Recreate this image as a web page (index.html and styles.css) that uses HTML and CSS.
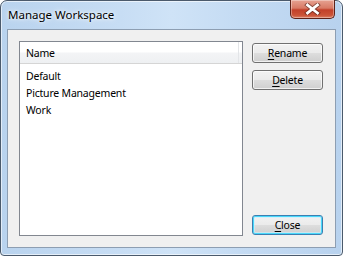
FILE: index.html
```html
<!DOCTYPE html>
<html>
<head>
<meta charset="utf-8">
<link rel="stylesheet" href="styles.css">
</head>
<body>
<div class="window">
  <div class="titlebar">
    <span class="title">Manage Workspace</span>
    <div class="close-x">
      <svg width="17" height="12" viewBox="0 0 17 12">
        <path d="M3.5 2 L13.5 10 M13.5 2 L3.5 10" fill="none" stroke="#4a1d15" stroke-width="4.6" stroke-linecap="square" opacity="0.6"/>
        <path d="M3.5 2 L13.5 10 M13.5 2 L3.5 10" fill="none" stroke="#ffffff" stroke-width="2.8" stroke-linecap="square"/>
      </svg>
    </div>
  </div>
  <div class="client">
    <div class="list">
      <div class="list-header"><span class="col">Name</span><span class="col-end"></span></div>
      <div class="item">Default</div>
      <div class="item">Picture Management</div>
      <div class="item">Work</div>
    </div>
    <div class="buttons">
      <button class="btn"><u>R</u>ename</button>
      <button class="btn"><u>D</u>elete</button>
      <div class="spacer"></div>
      <button class="btn default"><u>C</u>lose</button>
    </div>
  </div>
</div>
</body>
</html>
```
FILE: styles.css
```css
html, body {
  margin: 0;
  padding: 0;
  background: #ffffff;
}
.window {
  box-sizing: border-box;
  width: 343px;
  height: 256px;
  border: 1px solid #4b5a6c;
  border-radius: 7px 7px 4px 4px;
  background: linear-gradient(90deg, #b9d3ee 0%, #c7ddf4 35%, #cfe3f7 50%, #c4dbf3 70%, #b8d2ee 100%);
  padding: 0 6px 7px 6px;
  display: flex;
  flex-direction: column;
  box-shadow: inset 0 0 0 1px rgba(255,255,255,0.6);
  font-family: "Noto Sans", "Open Sans", sans-serif;
}
.titlebar {
  height: 28px;
  display: flex;
  align-items: flex-start;
  justify-content: space-between;
}
.title {
  margin-top: 6px;
  margin-left: 1px;
  font-size: 11.5px;
  color: #000;
  line-height: 16px;
  text-shadow: 0 0 6px rgba(255,255,255,0.9), 0 0 3px rgba(255,255,255,0.9);
}
.close-x {
  width: 45px;
  height: 19px;
  margin-right: 1px;
  margin-top: -1px;
  box-sizing: border-box;
  border: 1px solid #5d2219;
  border-top: none;
  border-radius: 0 0 5px 5px;
  background: linear-gradient(180deg, #e6a292 0%, #d87a66 45%, #c2402a 55%, #cb5438 85%, #dc8066 100%);
  box-shadow: inset 0 0 0 1px rgba(255,255,255,0.35);
  display: flex;
  align-items: center;
  justify-content: center;
}
.close-x svg {
  display: block;
}
.client {
  flex: 1;
  border: 1px solid #8d9eb2;
  background: #f0f0f0;
  display: flex;
  padding: 11px 12px 11px 11px;
  gap: 9px;
}
.list {
  width: 224px;
  box-sizing: border-box;
  border: 1px solid #828790;
  background: #ffffff;
  font-size: 10.5px;
  letter-spacing: -0.2px;
  color: #000;
}
.list-header {
  height: 21px;
  display: flex;
  align-items: center;
  background: linear-gradient(180deg, #ffffff 0%, #ffffff 45%, #f3f4f6 55%, #eef0f2 100%);
  border-bottom: 1px solid #d5d5d5;
  margin-bottom: 4px;
}
.col {
  flex: 1;
  padding-left: 6px;
}
.col-end {
  width: 3px;
  height: 21px;
  border-left: 1px solid #e3e5e8;
}
.item {
  height: 17px;
  line-height: 17px;
  padding-left: 6px;
  white-space: nowrap;
}
.buttons {
  display: flex;
  flex-direction: column;
  width: 71px;
  padding-top: 2px;
  gap: 7px;
}
.spacer {
  flex: 1;
}
.btn {
  box-sizing: border-box;
  height: 20px;
  width: 71px;
  border: 1px solid #707070;
  border-radius: 3px;
  background: linear-gradient(180deg, #f2f2f2 0%, #ebebeb 48%, #dddddd 52%, #cfcfcf 100%);
  box-shadow: inset 0 0 0 1px rgba(255,255,255,0.7);
  font-family: "Noto Sans", "Open Sans", sans-serif;
  font-size: 10.5px;
  letter-spacing: -0.2px;
  color: #000;
  padding: 0;
  line-height: 17px;
}
.btn u {
  text-decoration-thickness: 1px;
  text-underline-offset: 2px;
}
.btn.default {
  border-color: #3c7fb1;
  box-shadow: inset 0 0 0 1px #48d8fb, inset 0 0 0 2px rgba(200,240,255,0.6);
  margin-bottom: 1px;
}
```
